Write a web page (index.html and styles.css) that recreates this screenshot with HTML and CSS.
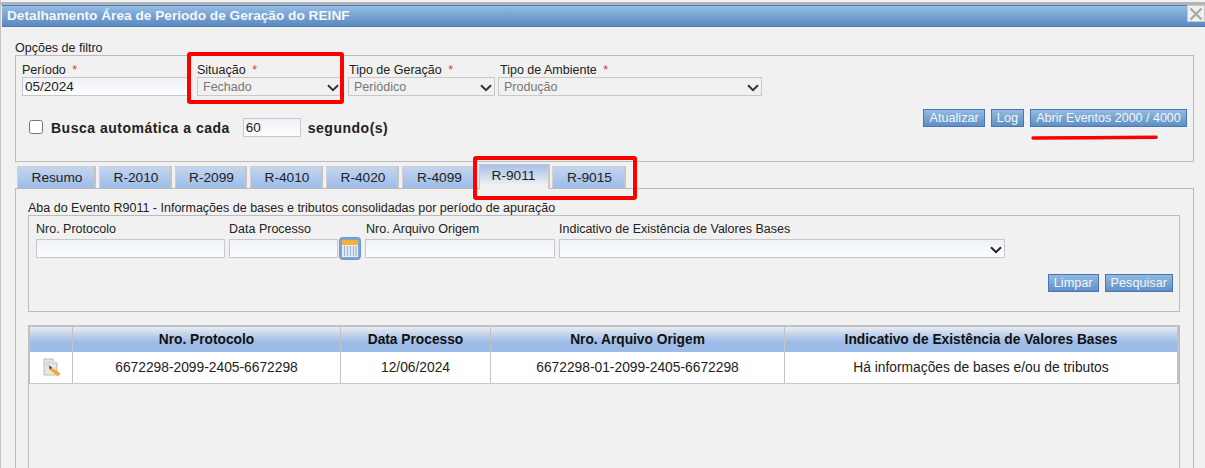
FILE: index.html
```html
<!DOCTYPE html>
<html lang="pt-BR">
<head>
<meta charset="utf-8">
<title>Detalhamento Área de Periodo de Geração do REINF</title>
<link rel="stylesheet" href="styles.css">
</head>
<body>
<div class="window">
  <div class="topstrip"></div>
  <header class="titlebar">
    <span class="title">Detalhamento Área de Periodo de Geração do REINF</span>
    <button class="close" aria-label="Fechar">
      <svg width="14" height="14" viewBox="0 0 14 14"><path d="M1.5 1.5 12.5 12.5M12.5 1.5 1.5 12.5" stroke="#a9a9a9" stroke-width="2.4" fill="none"/></svg>
    </button>
  </header>

  <main class="content">
    <div class="legend">Opções de filtro</div>
    <section class="filters">
      <div class="filter-row">
        <div class="field f-periodo">
          <label>Período <span class="req">*</span></label>
          <input class="txt" type="text" value="05/2024">
        </div>
        <div class="field f-situacao">
          <label>Situação <span class="req">*</span></label>
          <div class="sel"><select disabled><option>Fechado</option></select>
            <svg class="chev" width="12" height="8" viewBox="0 0 12 8"><path d="M1 1.2 6 6.2 11 1.2" stroke="#333" stroke-width="2" fill="none"/></svg></div>
        </div>
        <div class="field f-geracao">
          <label>Tipo de Geração <span class="req">*</span></label>
          <div class="sel"><select disabled><option>Periódico</option></select>
            <svg class="chev" width="12" height="8" viewBox="0 0 12 8"><path d="M1 1.2 6 6.2 11 1.2" stroke="#333" stroke-width="2" fill="none"/></svg></div>
        </div>
        <div class="field f-ambiente">
          <label>Tipo de Ambiente <span class="req">*</span></label>
          <div class="sel"><select disabled><option>Produção</option></select>
            <svg class="chev" width="12" height="8" viewBox="0 0 12 8"><path d="M1 1.2 6 6.2 11 1.2" stroke="#333" stroke-width="2" fill="none"/></svg></div>
        </div>
      </div>
      <div class="auto-row">
        <div class="auto">
          <input class="chk" type="checkbox">
          <b class="auto-l">Busca automática a cada</b>
          <input class="txt secs" type="text" value="60">
          <b class="auto-r">segundo(s)</b>
        </div>
        <div class="actions">
          <button class="btn">Atualizar</button>
          <button class="btn">Log</button>
          <button class="btn btn-wide">Abrir Eventos 2000 / 4000</button>
        </div>
      </div>
    </section>

    <nav class="tabs">
      <a class="tab w79">Resumo</a>
      <a class="tab w73">R-2010</a>
      <a class="tab w72">R-2099</a>
      <a class="tab w73">R-4010</a>
      <a class="tab w73">R-4020</a>
      <a class="tab w74">R-4099</a>
      <a class="tab active">R-9011</a>
      <a class="tab w74">R-9015</a>
    </nav>

    <section class="panel">
      <div class="panel-title">Aba do Evento R9011 - Informações de bases e tributos consolidadas por período de apuração</div>
      <div class="search">
        <div class="search-row">
          <div class="sfield s-prot"><label>Nro. Protocolo</label><input class="txt" type="text"></div>
          <div class="sfield s-data"><label>Data Processo</label>
            <div class="date-wrap"><input class="txt" type="text">
              <button class="cal" aria-label="Calendário">
                <svg width="22" height="23" viewBox="0 0 22 23">
                  <rect x="0.5" y="0.5" width="21" height="22" rx="3" fill="#7fa3d0" stroke="#6f96c9"/>
                  <rect x="3" y="3" width="16" height="17" fill="#e8eef6"/>
                  <rect x="3" y="3" width="16" height="5" fill="#f0b23c"/>
                  <path d="M5.5 9v10M8.5 9v10M11.5 9v10M14.5 9v10M17 9v10" stroke="#9fb4d2" stroke-width="1.2"/>
                </svg>
              </button>
            </div>
          </div>
          <div class="sfield s-arq"><label>Nro. Arquivo Origem</label><input class="txt" type="text"></div>
          <div class="sfield s-ind"><label>Indicativo de Existência de Valores Bases</label>
            <div class="sel light"><select><option></option></select>
              <svg class="chev" width="12" height="8" viewBox="0 0 12 8"><path d="M1 1.2 6 6.2 11 1.2" stroke="#222" stroke-width="2" fill="none"/></svg></div>
          </div>
        </div>
        <div class="search-actions">
          <button class="btn">Limpar</button>
          <button class="btn">Pesquisar</button>
        </div>
      </div>

      <div class="grid-frame">
        <table class="grid">
          <colgroup><col class="c1"><col class="c2"><col class="c3"><col class="c4"><col></colgroup>
          <thead>
            <tr><th></th><th>Nro. Protocolo</th><th>Data Processo</th><th>Nro. Arquivo Origem</th><th>Indicativo de Existência de Valores Bases</th></tr>
          </thead>
          <tbody>
            <tr>
              <td class="icon-cell">
                <svg class="edit" width="19" height="19" viewBox="0 0 19 19">
                  <path d="M1 1h9l4 4v12H1z" fill="#e9e7dc" stroke="#b9bcc6"/>
                  <path d="M10 1v4h4" fill="#fff" stroke="#b9bcc6"/>
                  <path d="M3 4h5M3 7h4" stroke="#c4c6cc"/>
                  <path d="M7.5 8.5 17.5 15.5 15 18.5 6.5 11.5z" fill="#f2a93a"/>
                  <path d="M6 7.5 9 9.6 6.8 11.5z" fill="#2d3340"/>
                </svg>
              </td>
              <td>6672298-2099-2405-6672298</td>
              <td>12/06/2024</td>
              <td>6672298-01-2099-2405-6672298</td>
              <td>Há informações de bases e/ou de tributos</td>
            </tr>
          </tbody>
        </table>
      </div>
    </section>
  </main>

  <div class="mark mark-sit"></div>
  <div class="mark mark-tabs"></div>
  <svg class="mark-line" width="130" height="6" viewBox="0 0 130 6"><path d="M2 3 C40 2.8 90 2.6 125 2.2" stroke="#f00" stroke-width="3.4" stroke-linecap="round" fill="none"/></svg>
</div>
</body>
</html>
```

FILE: styles.css
```css
* { box-sizing: border-box; }
html, body { margin: 0; padding: 0; height: 100%; overflow: hidden; background: #f1f1f1; }
body { font-family: "Liberation Sans", Arial, sans-serif; font-size: 12.5px; color: #222; }

.window { position: relative; width: 1205px; height: 468px; overflow: hidden; border-left: 1px solid #c4c4c4; }
.topstrip { height: 5px; margin-left: -1px; background: linear-gradient(#f2f2f2 0 2px, #b4b4b8 2px); }

.titlebar { height: 22px; margin-left: 1px; background: linear-gradient(#93bde2, #5b88c0); border-top: 1px solid #4c7cb8; border-bottom: 1px solid #4c7cb8; display: flex; justify-content: space-between; }
.title { color: #f4f7fb; font-weight: bold; font-size: 13.68px; line-height: 19px; padding-left: 5px; }
.close { width: 18px; height: 17px; margin: -1px 0 0; padding: 0; border: 1px solid #c9c9c9; background: #f1f1f1; display: flex; align-items: center; justify-content: center; }

.content { padding: 14px 11px 0 14px; }
.legend { height: 14px; line-height: 14px; }

.filters { height: 107px; border: 1px solid #bcbcbc; padding: 7px 0 0 6px; }
.filter-row { display: flex; }
.field label { display: block; height: 14px; line-height: 14px; white-space: nowrap; }
.req { color: #e33; margin-left: 3px; }
.f-periodo { width: 175px; }
.f-periodo .txt { width: 166px; }
.f-situacao { width: 151px; }
.f-situacao .sel { width: 145px; }
.f-situacao select { padding-left: 6px; }
.f-geracao { width: 150px; }
.f-geracao label { padding-left: 1px; }
.f-geracao .sel { width: 147px; }
.f-ambiente { width: 264px; }
.f-ambiente label { padding-left: 2px; }
.f-ambiente .sel { width: 264px; }
.f-ambiente select { padding-left: 6px; }

.txt { display: block; height: 19px; border: 1px solid #c8c8c8; padding: 0 2px; font: 13.5px "Liberation Sans", Arial, sans-serif; color: #222; background: linear-gradient(#eef2f8, #fdfdfe); border-radius: 0; outline: none; }

.sel { position: relative; height: 19px; }
.sel select { appearance: none; -webkit-appearance: none; width: 100%; height: 100%; display: block; border: 1px solid #c8c8c8; border-radius: 0; padding: 0 0 0 5px; font: 12.5px "Liberation Sans", Arial, sans-serif; color: #777; background: #f1f1f1; opacity: 1; }
.sel.light select { background: linear-gradient(#eef2f8, #fdfdfe); }
.chev { position: absolute; right: 3px; top: 7px; pointer-events: none; }

.auto-row { display: flex; justify-content: space-between; margin-top: 13px; padding-right: 6px; }
.auto { display: flex; align-items: center; height: 19px; margin: 9px 0 0 7px; }
.chk { width: 14px; height: 14px; margin: -1px 0 0; }
.auto b { font-size: 14px; letter-spacing: 0.5px; white-space: nowrap; }
.auto-l { margin-left: 8px; }
.secs { width: 58px; margin-left: 13px; }
.auto-r { margin-left: 7px; }

.actions { display: flex; gap: 6px; }
.btn { height: 18px; padding: 0 5px; border: 1px solid #4a74b5; border-radius: 0; background: linear-gradient(#93bbe0, #5f8fc4); color: #f3f6fb; font: 12.7px/14px "Liberation Sans", Arial, sans-serif; white-space: nowrap; }
.btn-wide { width: 157px; padding: 0; font-size: 12.5px; }

.tabs { display: flex; align-items: flex-end; height: 26px; padding-left: 2px; gap: 3px; }
.tab { display: block; height: 22px; padding-left: 2px; text-align: center; line-height: 21px; font-size: 13.7px; color: #222; background: linear-gradient(#c3d5ef, #9dbce8); border: 1px solid #d0d0d0; border-bottom: 0; border-right: 2px solid #c4c4c4; }
.w79 { width: 79px; } .w72 { width: 72px; } .w73 { width: 73px; } .w74 { width: 74px; }
.tab.active { width: 71px; height: 25px; line-height: 22px; padding: 0 1px 0 0; background: linear-gradient(#a6c1ea, #f1f1f1 85%); margin: 0 -1px -1px 0; position: relative; z-index: 1; border-color: #c8c8c8; }

.panel { height: 280px; border: 1px solid #bcbcbc; border-bottom: 0; padding: 0 13px 0 12px; }
.panel-title { height: 26px; line-height: 14px; padding-top: 12px; white-space: nowrap; }
.search { height: 97px; border: 1px solid #bcbcbc; padding: 6px 6px 0 7px; }
.search-row { display: flex; }
.sfield label { display: block; height: 17px; line-height: 14px; white-space: nowrap; }
.s-prot { width: 193px; } .s-prot .txt { width: 189px; }
.s-data { width: 136px; }
.date-wrap { display: flex; align-items: center; height: 19px; }
.date-wrap .txt { width: 109px; flex: none; }
.cal { padding: 0; margin: 0 0 0 1px; border: 0; background: none; width: 22px; height: 23px; flex: none; }
.cal svg { display: block; }
.s-arq { width: 194px; } .s-arq .txt { width: 190px; }
.s-arq label { padding-left: 1px; }
.s-ind { width: 446px; }
.search-actions { display: flex; justify-content: flex-end; gap: 6px; margin-top: 16px; }

.grid-frame { height: 160px; margin-top: 13px; border-left: 1px solid #bcbcbc; border-right: 1px solid #bcbcbc; }
.grid { width: 100%; table-layout: fixed; border-collapse: collapse; border: 2px solid #c2c2c2; border-width: 2px 2px 1px 1px; }
.c1 { width: 43px; } .c2 { width: 268px; } .c3 { width: 150px; } .c4 { width: 294px; }
.grid th { height: 26px; padding: 0; font-size: 13.75px; font-weight: bold; color: #111; background: linear-gradient(#e9ebf1, #9dbce8 60%); border-right: 1px solid #c4c4c4; }
.grid th:last-child, .grid td:last-child { border-right: 0; }
.grid td { height: 31px; padding: 0; text-align: center; font-size: 13.8px; color: #222; background: #fff; border-right: 1px solid #c4c4c4; border-bottom: 1px solid #c8c8c8; }
.icon-cell { line-height: 0; padding-left: 1px; }
.grid td.icon-cell { padding-left: 2px; }
.edit { vertical-align: middle; }

.mark { position: absolute; border: 4px solid #f00; border-radius: 3px; }
.mark-sit { left: 186px; top: 52px; width: 157px; height: 52px; }
.mark-tabs { left: 472px; top: 156px; width: 164px; height: 44px; }
.mark-line { position: absolute; left: 1030px; top: 135px; }
```
